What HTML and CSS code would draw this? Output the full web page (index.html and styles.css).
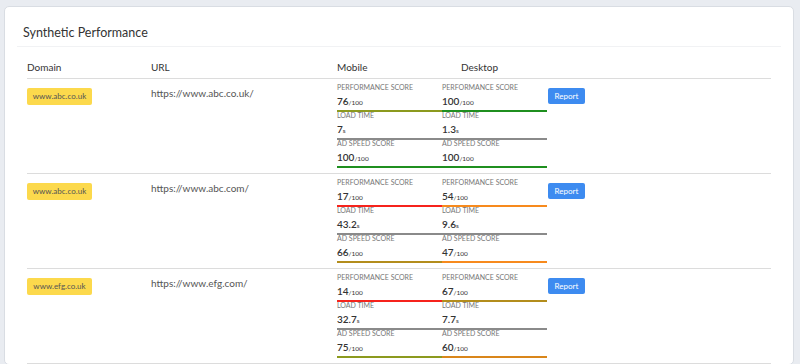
FILE: index.html
```html
<!DOCTYPE html>
<html>
<head>
    <meta charset="UTF-8">
    <title>Synthetic Performance</title>
    <link rel="stylesheet" href="styles.css">
</head>
<body>
    <div class="page">
        <div class="card">
            <div class="card-header">
                <h2>Synthetic Performance</h2>
            </div>

            <div class="card-body">
                <div class="row head">
                    <div>Domain</div>
                    <div>URL</div>
                    <div>Mobile</div>
                    <div class="desktop-head">Desktop</div>
                    <div></div>
                </div>

                <!-- Fila 1 -->
                <div class="row">
                    <div><span class="badge">www.abc.co.uk</span></div>
                    <div class="url">https://www.abc.co.uk/</div>
                    <div class="metrics">
                        <div class="metric">
                            <div class="label">Performance Score</div>
                            <div class="value">76<small>/100</small></div>
                            <div class="bar olive"></div>
                        </div>
                        <div class="metric">
                            <div class="label">Load Time</div>
                            <div class="value">7<small>s</small></div>
                            <div class="bar grey"></div>
                        </div>
                        <div class="metric">
                            <div class="label">Ad Speed Score</div>
                            <div class="value">100<small>/100</small></div>
                            <div class="bar green"></div>
                        </div>
                    </div>
                    <div class="metrics">
                        <div class="metric">
                            <div class="label">Performance Score</div>
                            <div class="value">100<small>/100</small></div>
                            <div class="bar green"></div>
                        </div>
                        <div class="metric">
                            <div class="label">Load Time</div>
                            <div class="value">1.3<small>s</small></div>
                            <div class="bar grey"></div>
                        </div>
                        <div class="metric">
                            <div class="label">Ad Speed Score</div>
                            <div class="value">100<small>/100</small></div>
                            <div class="bar green"></div>
                        </div>
                    </div>
                    <div><button type="button" class="btn">Report</button></div>
                </div>

                <!-- Fila 2 -->
                <div class="row">
                    <div><span class="badge">www.abc.co.uk</span></div>
                    <div class="url">https://www.abc.com/</div>
                    <div class="metrics">
                        <div class="metric">
                            <div class="label">Performance Score</div>
                            <div class="value">17<small>/100</small></div>
                            <div class="bar red"></div>
                        </div>
                        <div class="metric">
                            <div class="label">Load Time</div>
                            <div class="value">43.2<small>s</small></div>
                            <div class="bar grey"></div>
                        </div>
                        <div class="metric">
                            <div class="label">Ad Speed Score</div>
                            <div class="value">66<small>/100</small></div>
                            <div class="bar ochre"></div>
                        </div>
                    </div>
                    <div class="metrics">
                        <div class="metric">
                            <div class="label">Performance Score</div>
                            <div class="value">54<small>/100</small></div>
                            <div class="bar orange"></div>
                        </div>
                        <div class="metric">
                            <div class="label">Load Time</div>
                            <div class="value">9.6<small>s</small></div>
                            <div class="bar grey"></div>
                        </div>
                        <div class="metric">
                            <div class="label">Ad Speed Score</div>
                            <div class="value">47<small>/100</small></div>
                            <div class="bar orange"></div>
                        </div>
                    </div>
                    <div><button type="button" class="btn">Report</button></div>
                </div>

                <!-- Fila 3 -->
                <div class="row">
                    <div><span class="badge">www.efg.co.uk</span></div>
                    <div class="url">https://www.efg.com/</div>
                    <div class="metrics">
                        <div class="metric">
                            <div class="label">Performance Score</div>
                            <div class="value">14<small>/100</small></div>
                            <div class="bar red"></div>
                        </div>
                        <div class="metric">
                            <div class="label">Load Time</div>
                            <div class="value">32.7<small>s</small></div>
                            <div class="bar grey"></div>
                        </div>
                        <div class="metric">
                            <div class="label">Ad Speed Score</div>
                            <div class="value">75<small>/100</small></div>
                            <div class="bar olive"></div>
                        </div>
                    </div>
                    <div class="metrics">
                        <div class="metric">
                            <div class="label">Performance Score</div>
                            <div class="value">67<small>/100</small></div>
                            <div class="bar ochre"></div>
                        </div>
                        <div class="metric">
                            <div class="label">Load Time</div>
                            <div class="value">7.7<small>s</small></div>
                            <div class="bar grey"></div>
                        </div>
                        <div class="metric">
                            <div class="label">Ad Speed Score</div>
                            <div class="value">60<small>/100</small></div>
                            <div class="bar amber"></div>
                        </div>
                    </div>
                    <div><button type="button" class="btn">Report</button></div>
                </div>
            </div>
        </div>
    </div>
</body>
</html>
```

FILE: styles.css
```css
body {
    margin: 0;
    background-color: #e9ecf1;
    font-family: Lato, "Open Sans", sans-serif;
    color: #444;
    height: 364px;
    overflow: hidden;
}

.page {
    padding: 6px 6px 0 4px;
}

.card {
    background-color: #fff;
    border: 1px solid #d9dde3;
    border-radius: 5px;
}

.card-header {
    margin: 0 12px;
    height: 40px;
    box-sizing: border-box;
    padding-bottom: 5px;
    display: flex;
    align-items: flex-end;
    border-bottom: 1px solid #f1f2f4;
}

.card-header h2 {
    margin: 0 0 0 6px;
    font-size: 12.5px;
    line-height: 16px;
    font-weight: 400;
    color: #333;
}

.card-body {
    padding: 0 22px;
}

.row {
    display: grid;
    grid-template-columns: 124px 186px 105px 105px auto;
    border-bottom: 1px solid #dcdcdc;
    padding: 4px 0 6px;
}

.row.head {
    height: 32px;
    box-sizing: border-box;
    padding: 0 0 4px;
    align-items: end;
    font-size: 10px;
    line-height: 14px;
    color: #333;
}

.desktop-head {
    padding-left: 19px;
}

.badge {
    display: inline-block;
    margin-top: 4px;
    background-color: #fcd94c;
    color: #555;
    font-size: 8px;
    line-height: 17px;
    width: 65px;
    text-align: center;
    border-radius: 2px;
}

.url {
    font-size: 10px;
    line-height: 12px;
    margin-top: 4px;
    color: #555;
}

.metric {
    height: 28px;
}

.label {
    font-size: 7px;
    line-height: 9px;
    color: #777;
    text-transform: uppercase;
}

.value {
    margin-top: 2px;
    font-size: 10px;
    line-height: 15px;
    font-weight: 600;
    color: #333;
}

.value small {
    font-size: 6.5px;
    font-weight: 400;
}

.bar {
    height: 2px;
}

.olive { background-color: #8c9a1e; }
.green { background-color: #1f8f1f; }
.grey { background-color: #8a8a8a; }
.red { background-color: #f6231c; }
.orange { background-color: #f78a1d; }
.ochre { background-color: #b38d1c; }
.amber { background-color: #d9861a; }

.btn {
    margin: 4px 0 0 1px;
    width: 37px;
    height: 16px;
    padding: 0;
    background-color: #3d8bf0;
    color: #fff;
    border: none;
    border-radius: 2px;
    font-family: Lato, sans-serif;
    font-size: 8px;
    cursor: pointer;
}
```
